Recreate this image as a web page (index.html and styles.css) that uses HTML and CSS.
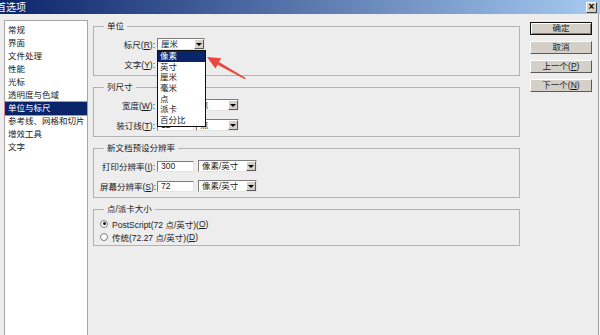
FILE: index.html
```html
<!DOCTYPE html>
<html lang="zh-CN">
<head>
<meta charset="utf-8">
<title>首选项</title>
<link rel="stylesheet" href="styles.css">
</head>
<body>
<div class="window">
  <div class="titlebar">
    <span class="title">首选项</span>
    <span class="close">×</span>
  </div>
  <div class="content">
    <ul class="nav">
      <li>常规</li>
      <li>界面</li>
      <li>文件处理</li>
      <li>性能</li>
      <li>光标</li>
      <li>透明度与色域</li>
      <li class="sel">单位与标尺</li>
      <li>参考线、网格和切片</li>
      <li>增效工具</li>
      <li>文字</li>
    </ul>
    <div class="main">
      <fieldset class="g">
        <legend>单位</legend>
        <div class="row">
          <span class="lbl">标尺(<u>R</u>):</span>
          <div class="select w48"><span>厘米</span><span class="dd"></span></div>
        </div>
        <div class="row">
          <span class="lbl">文字(<u>Y</u>):</span>
          <div class="select w48"><span>点</span><span class="dd"></span></div>
        </div>
      </fieldset>
      <fieldset class="g">
        <legend>列尺寸</legend>
        <div class="row">
          <span class="lbl">宽度(<u>W</u>):</span>
          <div class="field w37">180</div>
          <div class="select w43 ml2"><span>点</span><span class="dd"></span></div>
        </div>
        <div class="row">
          <span class="lbl">装订线(<u>T</u>):</span>
          <div class="field w37">12</div>
          <div class="select w43 ml2"><span>点</span><span class="dd"></span></div>
        </div>
      </fieldset>
      <fieldset class="g">
        <legend>新文档预设分辨率</legend>
        <div class="row">
          <span class="lbl">打印分辨率(<u>I</u>):</span>
          <div class="field w37">300</div>
          <div class="select w59 ml4"><span>像素/英寸</span><span class="dd"></span></div>
        </div>
        <div class="row">
          <span class="lbl">屏幕分辨率(<u>S</u>):</span>
          <div class="field w37">72</div>
          <div class="select w59 ml4"><span>像素/英寸</span><span class="dd"></span></div>
        </div>
      </fieldset>
      <fieldset class="g g4">
        <legend>点/派卡大小</legend>
        <div class="rrow"><span class="radio on"></span>PostScript(72 点/英寸)(<u>O</u>)</div>
        <div class="rrow"><span class="radio"></span>传统(72.27 点/英寸)(<u>D</u>)</div>
      </fieldset>
    </div>
    <div class="buttons">
      <div class="btn default">确定</div>
      <div class="btn">取消</div>
      <div class="btn">上一个(<u>P</u>)</div>
      <div class="btn">下一个(<u>N</u>)</div>
    </div>
  </div>
  <ul class="dropdown">
    <li class="hl">像素</li>
    <li>英寸</li>
    <li>厘米</li>
    <li>毫米</li>
    <li>点</li>
    <li>派卡</li>
    <li>百分比</li>
  </ul>
  <svg class="arrow" width="50" height="35" viewBox="0 0 50 35">
    <polygon points="7,7 21.2,8.2 19,12.1 45.7,27.9 44.9,29.3 17.6,14.7 15.4,18.6" fill="#e8483f"/>
  </svg>
</div>
</body>
</html>
```
FILE: styles.css
```css
* { box-sizing: border-box; }
html, body { margin: 0; padding: 0; }
body {
  width: 600px;
  height: 335px;
  overflow: hidden;
  background: #ededed;
  font-family: "Liberation Sans", "Noto Sans CJK SC", sans-serif;
  font-size: 8.5px;
  color: #1a1a1a;
}
u { text-decoration: underline; }
.window {
  position: relative;
  width: 600px;
  height: 335px;
  background: #ededed;
  box-shadow: inset -1px 0 0 #f8f8f8, inset -2px 0 0 #a0a0a0;
}
.titlebar {
  height: 14px;
  background: linear-gradient(to right, #0a246a, #a6caf0);
  display: flex;
  align-items: center;
  justify-content: space-between;
  color: #fff;
}
.title {
  margin-left: -4px;
  font-size: 10px;
  line-height: 14px;
  font-family: "Noto Sans CJK SC", sans-serif;
}
.close {
  width: 11px;
  height: 11px;
  margin-right: 3px;
  background: #d4d0c8;
  border: 1px solid;
  border-color: #fff #404040 #404040 #fff;
  color: #000;
  font-size: 10px;
  font-weight: bold;
  line-height: 8px;
  text-align: center;
}
.content {
  display: flex;
  align-items: flex-start;
  padding-left: 4px;
}
.nav {
  list-style: none;
  width: 84px;
  height: 330px;
  margin: 6px 0 0 0;
  padding: 3px 0 0 0;
  background: #fff;
  border: 1px solid #a5a5a5;
}
.nav li {
  height: 13px;
  line-height: 13px;
  padding-left: 3px;
  white-space: nowrap;
}
.nav li.sel {
  background: #0a246a;
  color: #fff;
  outline: 1px solid #d98293;
}
.main {
  width: 427px;
  margin-left: 5px;
  margin-top: 6px;
}
.g {
  margin: 0 0 5px 0;
  padding: 6px 6px 5px 6px;
  border: 1px solid #b2b2b2;
  min-width: 0;
}
.g legend {
  margin-left: 4px;
  padding: 0 3px;
  height: 12px;
  line-height: 12px;
}
.g4 { padding-top: 2px; padding-bottom: 2px; }
.row {
  display: flex;
  align-items: center;
  height: 12px;
}
.row + .row { margin-top: 8px; }
.lbl {
  width: 55px;
  margin-right: 2px;
  text-align: right;
  white-space: nowrap;
}
.field {
  height: 11px;
  background: #fff;
  border: 1px solid;
  border-color: #7c7c7c #e4e4e4 #e4e4e4 #7c7c7c;
  padding-left: 3px;
  line-height: 9px;
  white-space: nowrap;
}
.select {
  display: flex;
  align-items: center;
  justify-content: space-between;
  height: 12px;
  background: #fff;
  border: 1px solid;
  border-color: #7c7c7c #e4e4e4 #e4e4e4 #7c7c7c;
  padding-left: 3px;
  line-height: 10px;
  white-space: nowrap;
}
.dd {
  display: flex;
  align-items: center;
  justify-content: center;
  width: 10px;
  height: 10px;
  background: #d4d0c8;
  border: 1px solid;
  border-color: #fff #5a5a5a #5a5a5a #fff;
}
.dd::after {
  content: "";
  border-left: 3px solid transparent;
  border-right: 3px solid transparent;
  border-top: 3px solid #000;
}
.w37 { width: 37px; }
.w43 { width: 43px; }
.w48 { width: 48px; }
.w59 { width: 59px; }
.ml2 { margin-left: 2px; }
.ml4 { margin-left: 4px; }
.rrow {
  display: flex;
  align-items: center;
  height: 13px;
  white-space: nowrap;
}
.radio {
  position: relative;
  width: 8px;
  height: 8px;
  border-radius: 50%;
  border: 1px solid #7c7c7c;
  background: #fff;
  margin-right: 4px;
}
.radio.on::after {
  content: "";
  position: absolute;
  left: 1.5px;
  top: 1.5px;
  width: 3px;
  height: 3px;
  border-radius: 50%;
  background: #111;
}
.buttons {
  display: flex;
  flex-direction: column;
  gap: 6px;
  margin-left: 10px;
  margin-top: 8px;
}
.btn {
  width: 62px;
  height: 13px;
  background: #d4d0c8;
  border: 1px solid;
  border-color: #fff #5a5a5a #5a5a5a #fff;
  text-align: center;
  line-height: 11px;
  white-space: nowrap;
}
.btn.default {
  border-color: #111;
  box-shadow: inset 1px 1px 0 #fff, inset -1px -1px 0 #808080;
}
.dropdown {
  position: absolute;
  left: 157px;
  top: 50px;
  width: 49px;
  height: 77px;
  margin: 0;
  padding: 0;
  list-style: none;
  background: #fff;
  border: 1px solid #111;
}
.dropdown li {
  height: 10.7px;
  line-height: 10.7px;
  padding-left: 2px;
  white-space: nowrap;
}
.dropdown li.hl {
  background: #0a246a;
  color: #fff;
}
.arrow {
  position: absolute;
  left: 200px;
  top: 50px;
}
```
